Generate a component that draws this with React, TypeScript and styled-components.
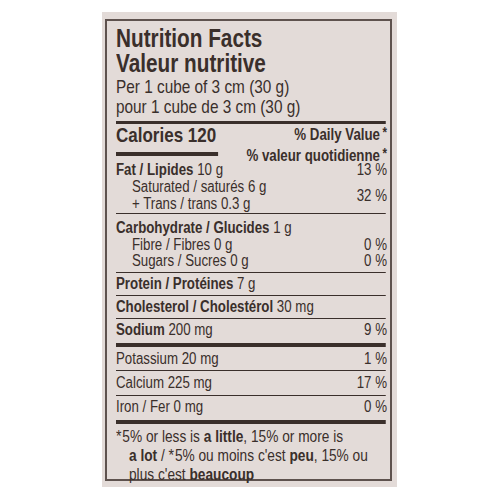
import styled, { createGlobalStyle } from "styled-components";

// Helvetica Condensed is not available, so the label text is set in
// Liberation Sans and narrowed as a whole.
const SQUEEZE = 0.83;

const GlobalStyle = createGlobalStyle`
  html, body {
    margin: 0;
    padding: 0;
    background: #ffffff;
  }
  body {
    font-family: "Liberation Sans", Arial, sans-serif;
    color: #3a2f2b;
  }
`;

const Page = styled.div`
  width: 500px;
  height: 500px;
  padding: 12px 0 0 102px;
  box-sizing: border-box;
`;

const Panel = styled.div`
  width: 295px;
  height: 475px;
  background: #e3dbd8;
  padding: 7px 5px 6px 3px;
  box-sizing: border-box;
  display: flex;
`;

const Label = styled.div`
  flex: 1;
  min-width: 0;
  min-height: 0;
  border: 2px solid #5e524e;
  padding: 5px 3px 0 9px;
`;

const Condensed = styled.div`
  width: ${271 / SQUEEZE}px;
  transform: scaleX(${SQUEEZE});
  transform-origin: left top;
  display: flex;
  flex-direction: column;
`;

const Title = styled.div`
  font-size: 25px;
  line-height: 25px;
  font-weight: 700;
`;

const Serving = styled.div`
  margin-top: 1px;
  font-size: 18.5px;
  line-height: 20px;
`;

const Rule = styled.div<{ $h: number; $mt?: number }>`
  height: ${(p) => p.$h}px;
  margin-top: ${(p) => p.$mt ?? 0}px;
  margin-right: 2px;
  background: #3a2f2b;
  flex-shrink: 0;
`;

const CaloriesRow = styled.div`
  display: flex;
  justify-content: space-between;
  height: 37px;
`;

const CaloriesCol = styled.div`
  display: flex;
  flex-direction: column;
`;

const Calories = styled.div`
  font-size: 20.5px;
  line-height: 22px;
  font-weight: 700;
`;

const CaloriesBar = styled.div`
  margin-top: 6px;
  width: ${102 / SQUEEZE}px;
  height: 4px;
  background: #3a2f2b;
`;

const DailyValue = styled.div`
  margin-top: -1px;
  font-size: 16px;
  line-height: 18px;
  font-weight: 700;
  text-align: right;
`;

const Star = styled.span`
  font-size: 14px;
  vertical-align: 3px;
  margin-left: 3px;
`;

const Section = styled.div<{ $pt?: number; $pb?: number; $lh?: number }>`
  padding-top: ${(p) => p.$pt ?? 0}px;
  padding-bottom: ${(p) => p.$pb ?? 0}px;
  font-size: 16px;
  line-height: ${(p) => p.$lh ?? 17}px;
`;

const Row = styled.div<{ $indent?: boolean }>`
  display: flex;
  justify-content: space-between;
  padding-left: ${(p) => (p.$indent ? 16 / SQUEEZE : 0)}px;
`;

const Pair = styled.div`
  display: flex;
  justify-content: space-between;
  align-items: center;
`;

const Sub = styled.div`
  padding-left: ${16 / SQUEEZE}px;
`;

const Footnote = styled.div`
  padding: 3px 0 0 ${13 / SQUEEZE}px;
  text-indent: -${13 / SQUEEZE}px;
  font-size: 16.5px;
  line-height: 18px;
`;

const FootStar = styled.span`
  font-size: 17px;
  margin-right: 1px;
`;

const App = () => (
  <Page>
    <GlobalStyle />
    <Panel>
      <Label>
        <Condensed>
          <Title>
            Nutrition Facts
            <br />
            Valeur nutritive
          </Title>
          <Serving>
            Per 1 cube of 3 cm (30 g)
            <br />
            pour 1 cube de 3 cm (30 g)
          </Serving>
          <Rule $h={3} $mt={4} />
          <CaloriesRow>
            <CaloriesCol>
              <Calories>Calories 120</Calories>
              <CaloriesBar />
            </CaloriesCol>
            <DailyValue>
              % Daily Value<Star>*</Star>
              <br />% valeur quotidienne<Star>*</Star>
            </DailyValue>
          </CaloriesRow>
          <Section $pb={1}>
            <Row>
              <span>
                <b>Fat / Lipides</b> 10 g
              </span>
              <span>13 %</span>
            </Row>
            <Pair>
              <Sub>
                Saturated / saturés 6 g
                <br />+ Trans / trans 0.3 g
              </Sub>
              <span>32 %</span>
            </Pair>
          </Section>
          <Rule $h={1} />
          <Section $pt={6} $pb={2.5} $lh={16.5}>
            <Row>
              <span>
                <b>Carbohydrate / Glucides</b> 1 g
              </span>
            </Row>
            <Row $indent>
              <span>Fibre / Fibres 0 g</span>
              <span>0 %</span>
            </Row>
            <Row $indent>
              <span>Sugars / Sucres 0 g</span>
              <span>0 %</span>
            </Row>
          </Section>
          <Rule $h={1} />
          <Section $lh={22}>
            <Row>
              <span>
                <b>Protein / Protéines</b> 7 g
              </span>
            </Row>
          </Section>
          <Rule $h={1} />
          <Section $lh={22}>
            <Row>
              <span>
                <b>Cholesterol / Cholestérol</b> 30 mg
              </span>
            </Row>
          </Section>
          <Rule $h={1} />
          <Section $lh={22} $pb={2}>
            <Row>
              <span>
                <b>Sodium</b> 200 mg
              </span>
              <span>9 %</span>
            </Row>
          </Section>
          <Rule $h={4} />
          <Section $lh={23}>
            <Row>
              <span>Potassium 20 mg</span>
              <span>1 %</span>
            </Row>
          </Section>
          <Rule $h={1} />
          <Section $lh={24}>
            <Row>
              <span>Calcium 225 mg</span>
              <span>17 %</span>
            </Row>
          </Section>
          <Rule $h={1} />
          <Section $lh={22} $pb={2}>
            <Row>
              <span>Iron / Fer 0 mg</span>
              <span>0 %</span>
            </Row>
          </Section>
          <Rule $h={4} />
          <Footnote>
            <FootStar>*</FootStar>5% or less is <b>a little</b>, 15% or more is
            <br />
            <b>a lot</b> / <FootStar>*</FootStar>5% ou moins c'est <b>peu</b>, 15% ou
            <br />
            plus c'est <b>beaucoup</b>
          </Footnote>
        </Condensed>
      </Label>
    </Panel>
  </Page>
);

export default App;
